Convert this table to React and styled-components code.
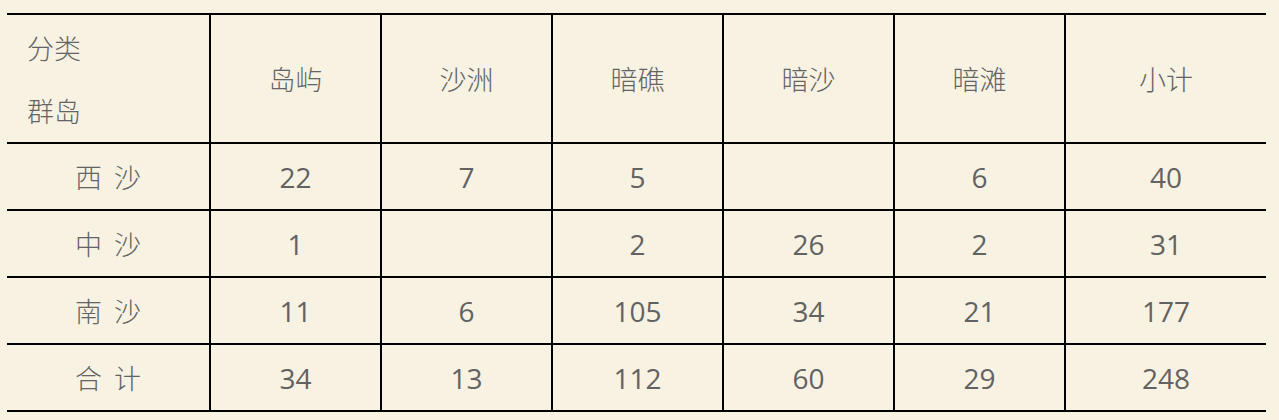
import styled, { createGlobalStyle } from "styled-components";

const GlobalStyle = createGlobalStyle`
  html, body {
    margin: 0;
    padding: 0;
    background: #f8f2e3;
  }
`;

const columns = ["岛屿", "沙洲", "暗礁", "暗沙", "暗滩", "小计"];

const rows = [
  { name: "西 沙", values: ["22", "7", "5", "", "6", "40"] },
  { name: "中 沙", values: ["1", "", "2", "26", "2", "31"] },
  { name: "南 沙", values: ["11", "6", "105", "34", "21", "177"] },
  { name: "合 计", values: ["34", "13", "112", "60", "29", "248"] },
];

const Page = styled.div`
  padding: 13px 13px 8px 7px;
  background: #f8f2e3;
`;

const Grid = styled.div`
  display: grid;
  width: 1259px;
  grid-template-columns: 204px repeat(5, 171px) 1fr;
  grid-template-rows: 129px repeat(4, 67px);
  border-top: 2px solid #000;
  font-family: "Open Sans", "Noto Sans CJK SC", sans-serif;
  color: #626262;
  font-size: 28px;
`;

const Cell = styled.div`
  display: flex;
  align-items: center;
  justify-content: ${(p) => (p.$left ? "flex-start" : "center")};
  box-sizing: border-box;
  border-bottom: 2px solid #000;
  border-right: ${(p) => (p.$last ? "none" : "2px solid #000")};
  padding-left: ${(p) => (p.$left ? "20px" : "0")};
`;

const CjkText = styled.span`
  font-family: "Noto Sans CJK SC", sans-serif;
  font-weight: 300;
  font-size: 27px;
  color: #646464;
  line-height: ${(p) => p.$lh || "normal"};
  word-spacing: ${(p) => p.$ws || "normal"};
  white-space: pre;
`;

const Corner = styled.div`
  display: flex;
  flex-direction: column;
`;

export default function App() {
  return (
    <Page>
      <GlobalStyle />
      <Grid>
        <Cell $left>
          <Corner>
            <CjkText $lh="63px">分类</CjkText>
            <CjkText $lh="63px">群岛</CjkText>
          </Corner>
        </Cell>
        {columns.map((c, i) => (
          <Cell key={c} $last={i === columns.length - 1}>
            <CjkText>{c}</CjkText>
          </Cell>
        ))}
        {rows.map((r) => [
          <Cell key={r.name}>
            <CjkText $ws="6px">{r.name}</CjkText>
          </Cell>,
          ...r.values.map((v, i) => (
            <Cell key={r.name + i} $last={i === r.values.length - 1}>
              {v}
            </Cell>
          )),
        ])}
      </Grid>
    </Page>
  );
}
